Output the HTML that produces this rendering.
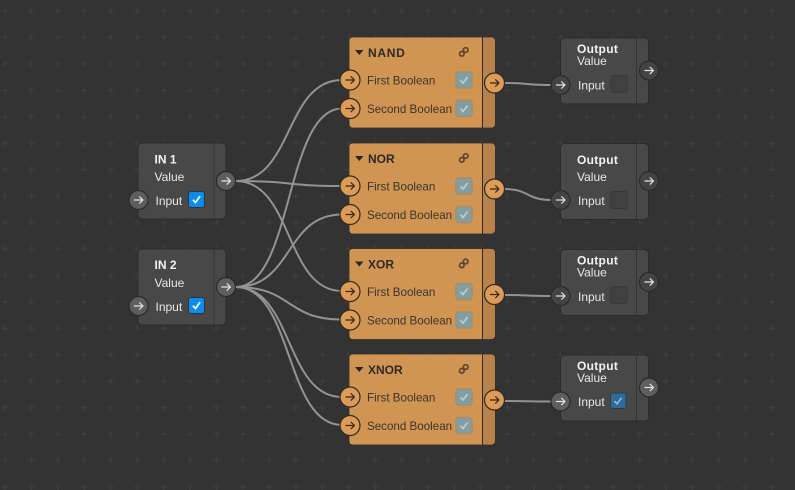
<!DOCTYPE html>
<html><head><meta charset="utf-8"><style>
html,body{margin:0;padding:0;background:#333;width:795px;height:490px;overflow:hidden}
svg{display:block}
text{font-family:"Liberation Sans",sans-serif;font-size:12px;fill:#e8e8e8}
.b{font-weight:bold;fill:#f2f2f2}
.w{font-weight:bold;fill:#f2f2f2;letter-spacing:.3px}
.o{fill:#3a3530;font-size:11.6px}
.ob{fill:#2e2a26;font-weight:bold}
</style></head><body>
<svg width="795" height="490" viewBox="0 0 795 490" xmlns="http://www.w3.org/2000/svg">
<defs>
<pattern id="g" x="-8.2" y="-2.2" width="26.44" height="26.44" patternUnits="userSpaceOnUse">
<path d="M13.2 9.7v7M9.7 13.2h7" stroke="#404040" stroke-width="1" fill="none"/>
</pattern>
<g id="pd"><circle r="9.5" fill="#5e5e5e" stroke="#2a2a2a" stroke-width="1.2"/><path d="M-4.5 0H4M.8-3.6 4.4 0 .8 3.6" fill="none" stroke="#e4e4e4" stroke-width="1.2"/></g>
<g id="pdk"><circle r="9.5" fill="#444" stroke="#2a2a2a" stroke-width="1.2"/><path d="M-4.5 0H4M.8-3.6 4.4 0 .8 3.6" fill="none" stroke="#e4e4e4" stroke-width="1.2"/></g>
<g id="po"><circle r="10" fill="#dd9b56" stroke="#2e2a26" stroke-width="1.2"/><path d="M-4.5 0H4M.8-3.6 4.4 0 .8 3.6" fill="none" stroke="#2e2a26" stroke-width="1.2"/></g>
<g id="cko"><rect x="-8" y="-8" width="16" height="16" rx="2.5" fill="#7f9fa6" stroke="#a98c66" stroke-width="1.4"/><path d="M-3.5 .3-1 3 3.6-3" fill="none" stroke="#c4c9c2" stroke-width="1.8"/></g>
<g id="ckb"><rect x="-8" y="-8" width="16" height="16" rx="2.5" fill="#0a8cf0" stroke="#333" stroke-width="1"/><path d="M-3.5 .3-1 3 3.6-3.4" fill="none" stroke="#fff" stroke-width="1.8"/></g>
<g id="nd"><rect x="0.5" y="0.5" width="88" height="76" rx="4" fill="#484848" stroke="#2b2b2b"/><path d="M76.5 1V76" stroke="#333" stroke-width="1"/></g>
<g id="ns"><rect x="0.5" y="0.5" width="88" height="66" rx="4" fill="#484848" stroke="#2b2b2b"/><path d="M76.5 1V66" stroke="#333" stroke-width="1"/></g>
<g id="orange">
<rect x="0" y="0" width="146" height="91" rx="3.5" fill="#d09453" stroke="#2b2b2b" stroke-width=".8"/>
<path d="M133 .5h9.500a3.500 3.500 0 0 1 3.500 3.500v83a3.500 3.500 0 0 1-3.500 3.500H133z" fill="#b8824a"/>
<path d="M133.500 0V91" stroke="#2e2a26" stroke-width="1"/>
<path d="M6 13h8.500l-4.200 5z" fill="#2a2622"/>
<g fill="none" stroke="#5b4630" stroke-width="1.700"><circle cx="112.800" cy="16.800" r="2.300"/><circle cx="116.700" cy="13" r="2.300"/></g>
<use href="#cko" x="115" y="43"/>
<use href="#cko" x="115" y="71.500"/>
</g>
</defs>
<rect width="795" height="490" fill="#333"/>
<rect width="795" height="490" fill="url(#g)"/>

<g fill="none" stroke="#939393" stroke-width="2">
<path d="M236 181C293 181 285 80 342 80"/>
<path d="M236 181C293 181 285 186 342 186"/>
<path d="M236 181C293 181 285 291 342 291"/>
<path d="M236 287C293 287 285 108.500 342 108.500"/>
<path d="M236 287C293 287 285 214.500 342 214.500"/>
<path d="M236 287C293 287 285 319.500 342 319.500"/>
<path d="M236 287C293 287 285 397 342 397"/>
<path d="M236 287C293 287 285 425 342 425"/>
<path d="M504 83C530 83 525 85 552 85"/>
<path d="M504 189C530 189 525 200 552 200"/>
<path d="M504 295C530 295 525 296 552 296"/>
<path d="M504 401C530 401 525 401.500 552 401.500"/>
</g>

<use href="#nd" x="137.500" y="142.500"/>
<use href="#pd" x="226" y="181"/>
<use href="#pd" x="138.500" y="200"/>
<text class="b" x="154.500" y="163.500">IN 1</text>
<text x="154.500" y="181">Value</text>
<text x="155.500" y="205">Input</text>
<use href="#ckb" x="196.500" y="199.500"/>

<use href="#nd" x="137.500" y="248.500"/>
<use href="#pd" x="226" y="287"/>
<use href="#pd" x="138.500" y="306"/>
<text class="b" x="154.500" y="269">IN 2</text>
<text x="154.500" y="287">Value</text>
<text x="155.500" y="311">Input</text>
<use href="#ckb" x="196.500" y="305.500"/>

<g transform="translate(349 37)"><use href="#orange"/><text class="ob" x="19" y="20" style="letter-spacing:.7px">NAND</text><text class="o" x="18" y="47.500">First Boolean</text><text class="o" x="18" y="76">Second Boolean</text></g>
<g transform="translate(349 143)"><use href="#orange"/><text class="ob" x="19" y="20">NOR</text><text class="o" x="18" y="47.500">First Boolean</text><text class="o" x="18" y="76">Second Boolean</text></g>
<g transform="translate(349 248.500)"><use href="#orange"/><text class="ob" x="19" y="20">XOR</text><text class="o" x="18" y="47.500">First Boolean</text><text class="o" x="18" y="76">Second Boolean</text></g>
<g transform="translate(349 354)"><use href="#orange"/><text class="ob" x="19" y="20">XNOR</text><text class="o" x="18" y="47.500">First Boolean</text><text class="o" x="18" y="76">Second Boolean</text></g>

<use href="#po" x="350" y="80"/><use href="#po" x="350" y="108.500"/><use href="#po" x="494.500" y="83"/>
<use href="#po" x="350" y="186"/><use href="#po" x="350" y="214.500"/><use href="#po" x="494.500" y="189"/>
<use href="#po" x="350" y="291.500"/><use href="#po" x="350" y="320"/><use href="#po" x="494.500" y="294.500"/>
<use href="#po" x="350" y="397"/><use href="#po" x="350" y="425.500"/><use href="#po" x="494.500" y="400"/>

<use href="#ns" x="560" y="37.500"/>
<text class="w" x="577" y="53">Output</text><text x="577" y="65">Value</text><text x="578" y="89.500">Input</text>
<rect x="610.500" y="75.500" width="17" height="17" rx="2.500" fill="#404040" stroke="#3a3a3a"/>
<use href="#pdk" x="560.500" y="85"/><use href="#pdk" x="649" y="70.500"/>

<use href="#nd" x="560" y="143"/>
<text class="w" x="577" y="164">Output</text><text x="577" y="181">Value</text><text x="578" y="205">Input</text>
<rect x="610.500" y="191.500" width="17" height="17" rx="2.500" fill="#404040" stroke="#3a3a3a"/>
<use href="#pdk" x="560.500" y="200"/><use href="#pdk" x="649" y="181"/>

<use href="#ns" x="560" y="249"/>
<text class="w" x="577" y="264.500">Output</text><text x="577" y="276.500">Value</text><text x="578" y="301">Input</text>
<rect x="610.500" y="286.500" width="17" height="17" rx="2.500" fill="#404040" stroke="#3a3a3a"/>
<use href="#pdk" x="560.500" y="296"/><use href="#pdk" x="649" y="282"/>

<use href="#ns" x="560" y="354.500"/>
<text class="w" x="577" y="370">Output</text><text x="577" y="382">Value</text><text x="578" y="406">Input</text>
<rect x="610.500" y="393" width="15.500" height="15.500" rx="2.500" fill="#2c6c9c" stroke="#3a3a3a"/>
<path d="M614.500 401l2.500 2.800 4.500-6" fill="none" stroke="#8fb3cc" stroke-width="1.700"/>
<use href="#pd" x="560.500" y="401.500"/><use href="#pd" x="649" y="387.500"/>
</svg>
</body></html>
